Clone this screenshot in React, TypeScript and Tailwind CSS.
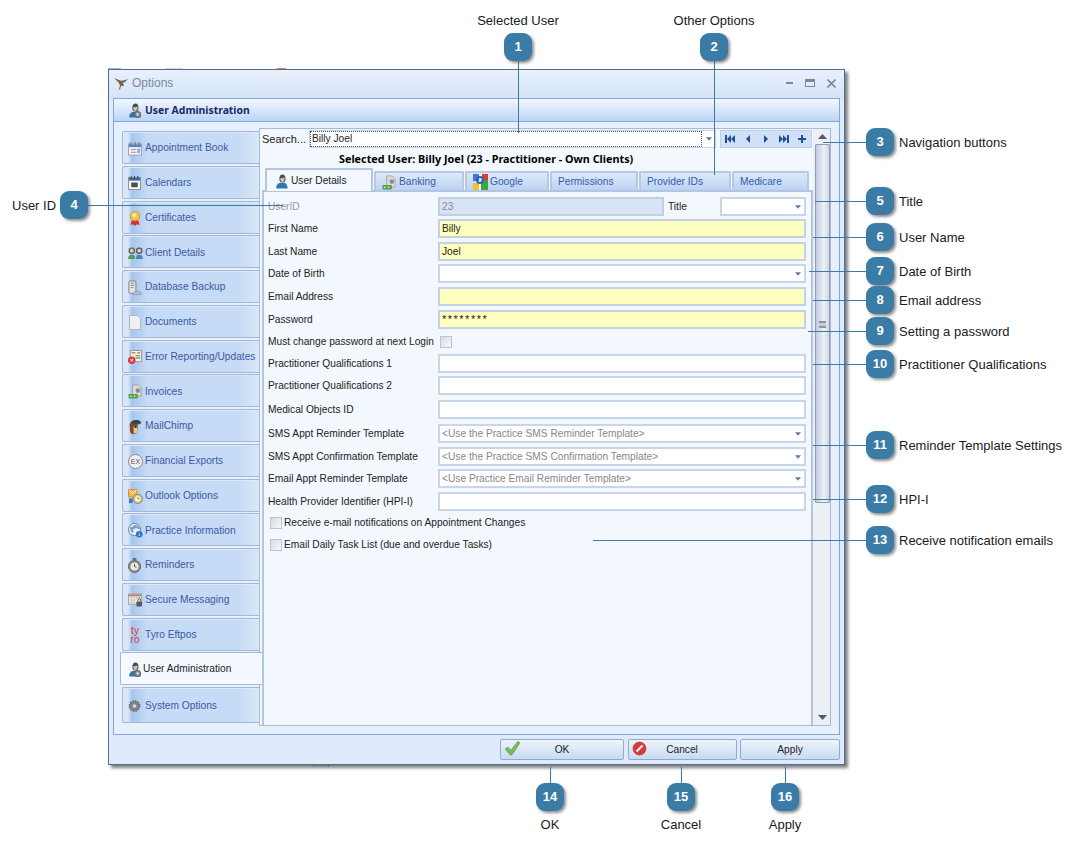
import React from 'react';

const Person = ({ gear = false }: { gear?: boolean }) => (
  <svg width="14" height="17" viewBox="0 0 16 18" className="shrink-0">
    <path d="M5 6c0-3 1-5 3.500-5S12 3 12 6s-1.500 4-3.500 4S5 9 5 6z" fill="#4a4f57" />
    <path d="M6 5c1 .5 3 .5 5-.5C11 8 10 9.500 8.500 9.500S6 8 6 5z" fill="#d8c4ae" />
    <path d="M1.500 17c-.5-4 2-6 5-6.500h4c2 .5 3.500 2 4 6.500z" fill="#2f78ad" />
    {gear && <circle cx="11" cy="13.500" r="3.500" fill="#8a8f96" stroke="#50555c" />}
    {gear && <circle cx="11" cy="13.500" r="1.300" fill="#e5e8ec" />}
  </svg>
);

const Gear = () => (
  <svg width="13" height="14" viewBox="0 0 16 16" className="shrink-0">
    <circle cx="8" cy="8" r="6" fill="#7d8186" stroke="#6b6f74" strokeWidth="2.500" strokeDasharray="2 1.100" />
    <circle cx="8" cy="8" r="4.500" fill="#85898e" />
    <circle cx="8" cy="8" r="2.200" fill="#d7dadd" />
  </svg>
);

const Note = () => (
  <svg width="15" height="15" viewBox="0 0 16 16" className="shrink-0">
    <path d="M5 1h6l3 3v9H5z" fill="#dcdcdc" stroke="#8f8f8f" strokeWidth=".7" />
    <circle cx="10.500" cy="7" r="2.500" fill="#8e8e8e" />
    <rect x="1" y="11" width="9" height="4" fill="#52ad48" stroke="#2f8429" strokeWidth=".5" />
    <circle cx="3" cy="13" r=".8" fill="#fff" />
    <circle cx="7" cy="13" r=".8" fill="#fff" />
  </svg>
);

const GoogleIcon = () => (
  <svg width="15" height="16" viewBox="0 0 15 16" className="shrink-0">
    <rect width="6" height="7" fill="#3d78d8" />
    <rect x="9" width="6" height="6" fill="#dc3b2e" />
    <rect x="6" width="3" height="16" fill="#f3f3f3" />
    <rect y="9" width="6" height="7" fill="#f2c02e" />
    <rect x="8" y="6" width="7" height="10" fill="#3da546" />
    <circle cx="7" cy="6" r="3" fill="none" stroke="#2c63bc" strokeWidth="2" />
  </svg>
);

const icons: Record<string, React.ReactNode> = {
  'Appointment Book': (
    <svg width="14" height="14" viewBox="0 0 15 15" className="shrink-0">
      <rect x=".5" y="2" width="14" height="12" fill="#f3f5fb" stroke="#93a3c0" />
      <rect x="1" y="2.500" width="13" height="3" fill="#5e83c2" />
      <path d="M3 0v4M7.500 0v4M12 0v4" stroke="#606c80" />
      <path d="M3 8h6M3 11h6" stroke="#d4756d" />
      <rect x="10" y="7" width="3" height="5" fill="#79b5e6" />
    </svg>
  ),
  Calendars: (
    <svg width="13" height="14" viewBox="0 0 14 15" className="shrink-0">
      <rect x=".5" y="1.500" width="13" height="13" fill="#f7f7f2" stroke="#8c8c8c" />
      <rect x="1" y="2" width="12" height="3" fill="#3870b4" />
      <path d="M3.500 0v3M7 0v3M10.500 0v3" stroke="#333" />
      <rect x="3.500" y="7" width="7" height="5" fill="#4d4d4d" />
    </svg>
  ),
  Certificates: (
    <svg width="12" height="15" viewBox="0 0 12 16" className="ml-[1px] shrink-0">
      <path d="M3 9l-2 6 3-1 2 2 2-2 3 1-2-6z" fill="#d8302a" />
      <circle cx="6" cy="5.500" r="5" fill="#f2c94a" stroke="#c89625" />
      <circle cx="5" cy="4.500" r="2" fill="#fbeaa4" />
    </svg>
  ),
  'Client Details': (
    <svg width="15" height="12" viewBox="0 0 16 13" className="shrink-0">
      <rect x=".5" y=".5" width="7" height="7" rx="3" fill="#5f6a62" />
      <rect x="8.500" y=".5" width="7" height="7" rx="3" fill="#555e6a" />
      <circle cx="4" cy="4" r="2" fill="#d9d2c7" />
      <circle cx="12" cy="4" r="2" fill="#d9d2c7" />
      <path d="M0 13c0-3 1.500-4.500 3.500-4.500h1C6.500 8.500 7.500 10 7.500 13z" fill="#4aa05a" />
      <path d="M8.500 13c0-3 1-4.500 3-4.500h1c2 0 3.500 1.500 3.500 4.500z" fill="#4e84b8" />
    </svg>
  ),
  'Database Backup': (
    <svg width="14" height="16" viewBox="0 0 16 17" className="shrink-0">
      <rect x="1" y=".5" width="8" height="14" rx="1" fill="#e3e3e3" stroke="#77797d" />
      <path d="M3 3h4M3 5.500h4M3 8h3" stroke="#80848a" />
      <path d="M6 15c0-2 2-3 4-3s5 1 6 3v1H6z" fill="#b9bdc2" stroke="#83868b" strokeWidth=".5" />
    </svg>
  ),
  Documents: (
    <svg width="12" height="15" viewBox="0 0 12 15" className="ml-[1px] shrink-0">
      <path d="M.5.500h8l3 3v11H.5z" fill="#eef0f2" stroke="#b3b6ba" />
    </svg>
  ),
  'Error Reporting/Updates': (
    <svg width="14" height="14" viewBox="0 0 15 15" className="shrink-0">
      <rect x="2.500" y=".5" width="12" height="12" fill="#eeeeea" stroke="#96989b" />
      <path d="M4 3h4M10 3h3" stroke="#c08b3d" strokeWidth="1.500" />
      <path d="M8 6h5M8 8.500h5" stroke="#7ca16d" strokeWidth="1.500" />
      <circle cx="4" cy="11" r="4" fill="#d93b3b" />
      <path d="M2.500 9.500l3 3M5.500 9.500l-3 3" stroke="#fff" />
    </svg>
  ),
  Invoices: <Note />,
  MailChimp: (
    <svg width="14" height="16" viewBox="0 0 15 17" className="shrink-0">
      <path d="M2 9c-1-5 2-8 6-8 3 0 6 1.500 6 4l-4 1c1 4 0 10-4 10S2 13 2 9z" fill="#7b4a26" />
      <path d="M3 4c2-3 7-4 10-2l1 2-7 1z" fill="#25485f" />
      <path d="M6 8c2 0 4 0 4 3s-2 5-4 4z" fill="#efc69b" />
      <circle cx="8" cy="8.500" r="1" fill="#1d1d1d" />
    </svg>
  ),
  'Financial Exports': (
    <span className="flex h-[15px] w-[15px] shrink-0 items-center justify-center rounded-full border border-[#8b8b8b] bg-[#f0f0f0] text-[7px] leading-none text-[#555]">
      EX
    </span>
  ),
  'Outlook Options': (
    <svg width="15" height="15" viewBox="0 0 16 16" className="shrink-0">
      <rect x=".5" y=".5" width="9" height="8" fill="#f4b74a" stroke="#d6902a" />
      <path d="M1 1l4 4 4-4" fill="none" stroke="#fff" />
      <rect x="1" y="10" width="4" height="5" fill="#3d7cb8" />
      <circle cx="10.500" cy="10.500" r="5" fill="#f2c14a" stroke="#4f93c9" />
      <circle cx="10.500" cy="10.500" r="2.800" fill="#fff" />
      <path d="M10.500 8.500v2h2" stroke="#444" strokeWidth=".7" fill="none" />
    </svg>
  ),
  'Practice Information': (
    <svg width="15" height="15" viewBox="0 0 16 16" className="shrink-0">
      <circle cx="7" cy="7" r="6.500" fill="#e3ecf7" stroke="#5d7ea6" />
      <path d="M2 4c2 1 3 0 4-1s3-1 4 0-1 3-3 3-2 2-1 3-1 2-3 0z" fill="#7f9cc0" />
      <path d="M9 3l3 1 1 3-3-1z" fill="#7f9cc0" />
      <circle cx="12" cy="12" r="3.500" fill="#2b75c8" />
      <path d="M12 10.500v.8M12 12v2" stroke="#fff" />
    </svg>
  ),
  Reminders: (
    <svg width="13" height="15" viewBox="0 0 14 16" className="shrink-0">
      <rect x="5" y="0" width="4" height="2" fill="#6d6d6d" />
      <circle cx="7" cy="9" r="6.500" fill="#8d8d8d" stroke="#5f5f5f" />
      <circle cx="7" cy="9" r="4.300" fill="#e9e9e2" />
      <path d="M7 6.500V9l2 1" stroke="#444" fill="none" />
    </svg>
  ),
  'Secure Messaging': (
    <svg width="15" height="14" viewBox="0 0 16 15" className="shrink-0">
      <rect x=".5" y="1" width="14" height="11" fill="#ece9e6" stroke="#a2a2a2" />
      <rect x="1" y="1.500" width="13" height="2" fill="#c9776f" />
      <path d="M3 5h1M6 5h1M9 5h1M12 5h1M3 7.500h1M6 7.500h1M3 10h1M6 10h1" stroke="#8a8f97" strokeWidth="1.500" />
      <rect x="9" y="9" width="6" height="5.500" rx="1" fill="#55595f" />
      <path d="M10.500 9V7.500a1.500 1.500 0 013 0V9" fill="none" stroke="#55595f" />
    </svg>
  ),
  'Tyro Eftpos': (
    <span className="ml-[1px] flex w-[12px] shrink-0 flex-col items-center text-[10px] leading-[9px] text-[#d8353c]">
      <span>ty</span>
      <span>ro</span>
    </span>
  ),
  'User Administration': <Person gear />,
  'System Options': <Gear />,
};

const sideItems = [
  'Appointment Book',
  'Calendars',
  'Certificates',
  'Client Details',
  'Database Backup',
  'Documents',
  'Error Reporting/Updates',
  'Invoices',
  'MailChimp',
  'Financial Exports',
  'Outlook Options',
  'Practice Information',
  'Reminders',
  'Secure Messaging',
  'Tyro Eftpos',
  'User Administration',
  'System Options',
];

const Arrow = () => (
  <svg width="6" height="4" viewBox="0 0 7 4" className="shrink-0">
    <path d="M0 0h7L3.500 4z" fill="#5d7ba6" />
  </svg>
);

const Field = ({
  value = '',
  yellow = false,
  select = false,
  muted = false,
  stars = false,
  className = 'flex-1',
}: {
  value?: string;
  yellow?: boolean;
  select?: boolean;
  muted?: boolean;
  stars?: boolean;
  className?: string;
}) => (
  <div
    className={`flex h-[19px] items-center justify-between border-2 pl-[2px] pr-[3px] ${
      yellow ? 'border-[#c3d1e6] bg-[#ffffbf]' : 'border-[#c8d6ea] bg-white'
    } ${muted ? 'text-[#888]' : 'text-[#222]'} ${className}`}
  >
    <span className={stars ? 'tracking-[1.500px] text-[11px]' : 'pt-[1px]'}>{value}</span>
    {select && <Arrow />}
  </div>
);

const Row = ({ label, mt, dim = false, children }: { label: string; mt: string; dim?: boolean; children?: React.ReactNode }) => (
  <div className={`flex h-[19px] items-center ${mt}`}>
    <span className={`w-[170px] shrink-0 whitespace-nowrap pt-[1px] ${dim ? 'text-[#9a9a9a]' : 'text-[#222]'}`}>{label}</span>
    {children}
  </div>
);

const Checkbox = () => (
  <span className="h-[12px] w-[12px] shrink-0 border border-[#b9c3d2] bg-[linear-gradient(135deg,#d5dae2,#f8f9fb)]" />
);

const Tab = ({ children, w, active = false }: { children: React.ReactNode; w: string; active?: boolean }) =>
  active ? (
    <div className={`relative z-10 flex h-[23px] items-center gap-[2px] rounded-t-[2px] border-2 border-b-0 border-[#b3c5e0] bg-[#f3f8ff] pl-[8px] pt-[1px] text-[#222] ${w}`}>
      {children}
    </div>
  ) : (
    <div className={`flex h-[20px] items-center gap-[2px] rounded-t-[2px] border-2 border-b-0 border-[#b6c8e2] bg-[linear-gradient(#dce9fa,#b9d2f2)] pl-[6px] text-[#3a5aa6] ${w}`}>
      {children}
    </div>
  );

const SmallTri = ({ d }: { d: string }) => (
  <svg width="10" height="8" viewBox="0 0 10 8" className="shrink-0">
    <path d={d} fill="#1d4f9c" />
  </svg>
);

const callouts = [
  { n: 1, box: 'left-[504px] top-[33px]' },
  { n: 2, box: 'left-[700px] top-[33px]' },
  { n: 3, box: 'left-[866px] top-[128px]' },
  { n: 4, box: 'left-[60px] top-[191px]' },
  { n: 5, box: 'left-[866px] top-[187px]' },
  { n: 6, box: 'left-[866px] top-[223px]' },
  { n: 7, box: 'left-[866px] top-[257px]' },
  { n: 8, box: 'left-[866px] top-[286px]' },
  { n: 9, box: 'left-[866px] top-[317px]' },
  { n: 10, box: 'left-[866px] top-[350px]' },
  { n: 11, box: 'left-[866px] top-[431px]' },
  { n: 12, box: 'left-[866px] top-[485px]' },
  { n: 13, box: 'left-[866px] top-[526px]' },
  { n: 14, box: 'left-[536px] top-[783px]' },
  { n: 15, box: 'left-[667px] top-[783px]' },
  { n: 16, box: 'left-[771px] top-[783px]' },
];

const lines = [
  'left-[518px] top-[60px] h-[73px] w-px',
  'left-[714px] top-[60px] h-[115px] w-px',
  'left-[823px] top-[142px] h-px w-[45px]',
  'left-[87px] top-[205px] h-px w-[196px]',
  'left-[815px] top-[201px] h-px w-[53px]',
  'left-[813px] top-[237px] h-px w-[55px]',
  'left-[809px] top-[271px] h-px w-[59px]',
  'left-[813px] top-[300px] h-px w-[55px]',
  'left-[808px] top-[331px] h-px w-[60px]',
  'left-[813px] top-[364px] h-px w-[55px]',
  'left-[813px] top-[445px] h-px w-[55px]',
  'left-[813px] top-[499px] h-px w-[55px]',
  'left-[593px] top-[540px] h-px w-[275px]',
  'left-[550px] top-[767px] h-[17px] w-px',
  'left-[681px] top-[767px] h-[17px] w-px',
  'left-[785px] top-[767px] h-[17px] w-px',
];

const rightLabels = [
  { t: 'Navigation buttons', c: 'top-[135px]' },
  { t: 'Title', c: 'top-[194px]' },
  { t: 'User Name', c: 'top-[230px]' },
  { t: 'Date of Birth', c: 'top-[264px]' },
  { t: 'Email address', c: 'top-[293px]' },
  { t: 'Setting a password', c: 'top-[324px]' },
  { t: 'Practitioner Qualifications', c: 'top-[357px]' },
  { t: 'Reminder Template Settings', c: 'top-[438px]' },
  { t: 'HPI-I', c: 'top-[492px]' },
  { t: 'Receive notification emails', c: 'top-[533px]' },
];

const centerLabels = [
  { t: 'Selected User', c: 'left-[418px] top-[13px]' },
  { t: 'Other Options', c: 'left-[614px] top-[13px]' },
  { t: 'OK', c: 'left-[450px] top-[817px]' },
  { t: 'Cancel', c: 'left-[581px] top-[817px]' },
  { t: 'Apply', c: 'left-[685px] top-[817px]' },
];

const FooterBtn = ({ w, icon, label }: { w: string; icon?: React.ReactNode; label: string }) => (
  <div className={`relative flex h-[21px] items-center justify-center rounded-[2px] border border-[#8eabd2] bg-[linear-gradient(#eef4fc,#dbe7f6_50%,#c9daf0)] pt-[1px] text-[#222] ${w}`}>
    {icon && <span className="absolute left-[3px] top-[1px]">{icon}</span>}
    {label}
  </div>
);

export default function App() {
  return (
    <div className="relative h-[848px] w-[1078px] overflow-hidden bg-white font-['Liberation_Sans',sans-serif]">
      {/* bits of the page behind the dialog */}
      <div className="absolute left-[277px] top-[68px] h-px w-[9px] bg-[#e07a68]" />
      <div className="absolute left-[108px] top-[68px] h-px w-[13px] bg-[#a9b4c4]" />
      <div className="absolute left-[165px] top-[68px] h-px w-[18px] bg-[#cfdde9]" />
      <div className="absolute left-[313px] top-[764px] h-[3px] w-[16px] border-x border-[#8fa8ce] bg-[#e3edfb]" />

      {/* dialog */}
      <div className="absolute left-[108px] top-[69px] flex h-[696px] w-[737px] flex-col border border-[#4f6d92] bg-[#dfebfc] text-[10.200px] leading-none shadow-[3px_3px_3px_rgba(60,60,60,0.65)]">
        {/* title bar */}
        <div className="flex h-[28px] shrink-0 items-center bg-[linear-gradient(#e9f1fc,#d4e4f8)] pb-[2px] pl-[4px] pr-[8px]">
          <svg width="16" height="15" viewBox="0 0 16 15" className="mr-[3px]">
            <path d="M1 2l5 2 3 1 6-2-3 3-2 1 1 3H8l-1 4-1-1 1-4-2-3z" fill="#6f6a5c" />
            <path d="M8 5l4-1-3 3z" fill="#b4573b" />
          </svg>
          <span className="text-[12px] text-[#7b8899]">Options</span>
          <div className="ml-auto flex items-center gap-[12px]">
            <span className="h-[2px] w-[7px] bg-[#808a97]" />
            <span className="h-[8px] w-[10px] border border-t-[3px] border-[#808a97]" />
            <svg width="9" height="9" viewBox="0 0 9 9">
              <path d="M.5.500l8 8M8.500.500l-8 8" stroke="#808a97" strokeWidth="1.600" />
            </svg>
          </div>
        </div>

        {/* group */}
        <div className="mx-[4px] flex h-[637px] shrink-0 flex-col border border-[#82a8da] bg-[#e6f0fe]">
          <div className="flex h-[23px] shrink-0 items-center gap-[3px] border-b border-[#82a9da] bg-[linear-gradient(#f4f8fe,#bcd4f4)] pl-[14px] text-[#15296b]">
            <Person gear />
            <span className="font-['Noto_Sans',sans-serif] text-[10.400px] font-bold">User Administration</span>
          </div>

          <div className="flex flex-1 pl-[8px] pt-[6px]">
            {/* side tabs */}
            <div className="flex w-[137px] shrink-0 flex-col gap-[1.750px] pt-[3px]">
              {sideItems.map(item =>
                item === 'User Administration' ? (
                  <div
                    key={item}
                    className="relative z-20 -ml-[2px] -mr-[3px] flex h-[33px] shrink-0 items-center gap-[1px] rounded-l-[2px] border border-r-0 border-[#a3b7d6] bg-[#f5f9ff] pl-[7px] pt-[1px] text-[#222]"
                  >
                    <span className="flex w-[14px] shrink-0">{icons[item]}</span>
                    {item}
                  </div>
                ) : (
                  <div
                    key={item}
                    className={`relative flex shrink-0 items-center rounded-l-[2px] border border-r-0 border-[#a3b7d6] bg-[linear-gradient(90deg,#d8e6f8,#d8e6f8_5px,#a7c6ed_9px,#c6dbf5_24px,#c6dbf5_85%,#d9e7f8)] pl-[5px] pt-[2px] text-[#3a5aa6] shadow-[inset_1px_1px_0_#dce8f8] ${
                      item === 'System Options' ? 'h-[36px]' : 'h-[33px]'
                    }`}
                  >
                    <span className="flex w-[17px] shrink-0">{icons[item]}</span>
                    <span className="whitespace-nowrap">{item}</span>
                  </div>
                )
              )}
            </div>

            {/* page */}
            <div className="relative z-10 flex h-[598px] w-[572px] shrink-0 border border-[#a6bad8] bg-[#f3f8ff]">
              <div className="flex w-[553px] shrink-0 flex-col">
                <div className="flex h-[19px] shrink-0 items-end pl-[2px]">
                  <span className="flex h-[18px] w-[47px] items-center text-[11px] text-[#222]">Search...</span>
                  <div className="flex h-[18px] w-[407px] items-center border border-[#c5d3e8] bg-white">
                    <div className="flex h-[16px] w-[392px] items-center border border-dotted border-[#555] pl-[1px] pt-[1px] text-[#222]">
                      Billy Joel
                    </div>
                    <span className="ml-[4px]"><Arrow /></span>
                  </div>
                  <div className="ml-[4px] flex h-[18px] w-[92px] items-center justify-between border border-[#bdd0ea] bg-[#cfe0f7] px-[4px]">
                    <SmallTri d="M0 0h2v8H0zM6 0v8L2 4zM10 0v8L6 4z" />
                    <SmallTri d="M7 0v8L3 4z" />
                    <SmallTri d="M3 0v8l4-4z" />
                    <SmallTri d="M10 0H8v8h2zM0 0v8l4-4zM4 0v8l4-4z" />
                    <SmallTri d="M4 0h2v3h3v2H6v3H4V5H1V3h3z" />
                  </div>
                </div>
                <div className="flex h-[20px] shrink-0 items-center pl-[79px] pt-[2px] font-['Noto_Sans',sans-serif] text-[10.800px] font-bold text-black">
                  Selected User: Billy Joel (23 - Practitioner - Own Clients)
                </div>
                <div className="-mb-px flex h-[23px] shrink-0 items-end gap-[1px] pl-[5px]">
                  <Tab w="w-[108px]" active>
                    <Person />
                    User Details
                  </Tab>
                  <Tab w="w-[90px]">
                    <Note />
                    Banking
                  </Tab>
                  <Tab w="w-[84px]">
                    <GoogleIcon />
                    Google
                  </Tab>
                  <Tab w="w-[88px]">Permissions</Tab>
                  <Tab w="w-[92px]">Provider IDs</Tab>
                  <Tab w="w-[77px]">Medicare</Tab>
                </div>
                <div className="ml-[2px] flex-1 border-2 border-b-0 border-[#b3c5e0] pl-[4px] pr-[5px] pt-[5px]">
                  <Row label="UserID" dim mt="mt-0">
                    <div className="flex h-[19px] w-[226px] items-center border-2 border-[#c0cfe4] bg-[#d8e4f3] pl-[2px] pt-[1px] text-[#8a8a8a]">23</div>
                    <span className="ml-[4px] w-[52px] pt-[1px] text-[#222]">Title</span>
                    <Field select />
                  </Row>
                  <Row label="First Name" mt="mt-[3px]"><Field yellow value="Billy" /></Row>
                  <Row label="Last Name" mt="mt-[4px]"><Field yellow value="Joel" /></Row>
                  <Row label="Date of Birth" mt="mt-[3px]"><Field select /></Row>
                  <Row label="Email Address" mt="mt-[4px]"><Field yellow /></Row>
                  <Row label="Password" mt="mt-[4px]"><Field yellow stars value="********" /></Row>
                  <Row label="Must change password at next Login" mt="mt-[3px]">
                    <span className="ml-[2px] flex"><Checkbox /></span>
                  </Row>
                  <Row label="Practitioner Qualifications 1" mt="mt-[3px]"><Field /></Row>
                  <Row label="Practitioner Qualifications 2" mt="mt-[3px]"><Field /></Row>
                  <Row label="Medical Objects ID" mt="mt-[5px]"><Field /></Row>
                  <Row label="SMS Appt Reminder Template" mt="mt-[5px]">
                    <Field select muted value="<Use the Practice SMS Reminder Template>" />
                  </Row>
                  <Row label="SMS Appt Confirmation Template" mt="mt-[4px]">
                    <Field select muted value="<Use the Practice SMS Confirmation Template>" />
                  </Row>
                  <Row label="Email Appt Reminder Template" mt="mt-[3px]">
                    <Field select muted value="<Use Practice Email Reminder Template>" />
                  </Row>
                  <Row label="Health Provider Identifier (HPI-I)" mt="mt-[4px]"><Field /></Row>
                  <div className="mt-[5px] flex h-[14px] items-center gap-[2px] pl-[2px] text-[#222]">
                    <Checkbox />
                    <span className="pt-[1px]">Receive e-mail notifications on Appointment Changes</span>
                  </div>
                  <div className="mt-[8px] flex h-[14px] items-center gap-[2px] pl-[2px] text-[#222]">
                    <Checkbox />
                    <span className="pt-[1px]">Email Daily Task List (due and overdue Tasks)</span>
                  </div>
                </div>
              </div>

              {/* scrollbar */}
              <div className="flex w-[17px] shrink-0 flex-col items-end bg-[#eceff4]">
                <div className="flex h-[15px] w-[15px] shrink-0 items-center justify-center">
                  <svg width="9" height="5" viewBox="0 0 9 5"><path d="M4.500 0L9 5H0z" fill="#4c5a78" /></svg>
                </div>
                <div className="flex h-[359px] w-[15px] shrink-0 items-end justify-center rounded-[1px] border border-[#8e9fbc] bg-[linear-gradient(90deg,#bfcbdb,#eef2f7_60%,#d0d8e4)] pb-[174px]">
                  <span className="h-[7px] w-[7px] border-y-2 border-[#8c94a3] bg-[#c9d0da]" />
                </div>
                <div className="mt-auto flex h-[16px] w-[15px] items-center justify-center">
                  <svg width="9" height="5" viewBox="0 0 9 5"><path d="M0 0h9L4.500 5z" fill="#4c5a78" /></svg>
                </div>
              </div>
            </div>
          </div>
        </div>

        {/* footer */}
        <div className="flex flex-1 items-center justify-end gap-[3.500px] pr-[4px]">
          <FooterBtn
            w="w-[124px]"
            label="OK"
            icon={
              <svg width="17" height="15" viewBox="0 0 17 15">
                <path d="M1 8l3-2 3 3 7-9 2 2-8 12H6z" fill="#7cb85c" stroke="#5c9a42" strokeWidth=".5" />
              </svg>
            }
          />
          <FooterBtn
            w="w-[109px]"
            label="Cancel"
            icon={
              <svg width="15" height="15" viewBox="0 0 15 15">
                <circle cx="7.500" cy="7.500" r="6.500" fill="#d93a3a" stroke="#a92a2a" strokeWidth=".6" />
                <path d="M4.500 10.500l6-6" stroke="#fff" strokeWidth="2" />
              </svg>
            }
          />
          <FooterBtn w="w-[100px]" label="Apply" />
        </div>
      </div>

      {/* callouts */}
      {lines.map(l => (
        <div key={l} className={`absolute z-30 bg-[#3a7ca5] ${l}`} />
      ))}
      {callouts.map(c => (
        <div
          key={c.n}
          className={`absolute z-30 flex h-[28px] w-[28px] items-center justify-center rounded-[9px] bg-[#3a7ca5] text-[13px] font-bold text-white shadow-[2px_2px_3px_rgba(70,70,70,0.6)] ${c.box}`}
        >
          {c.n}
        </div>
      ))}
      {rightLabels.map(l => (
        <span key={l.t} className={`absolute left-[899px] text-[13px] leading-[16px] text-[#1a1a1a] ${l.c}`}>
          {l.t}
        </span>
      ))}
      {centerLabels.map(l => (
        <span key={l.t} className={`absolute w-[200px] text-center text-[13px] leading-[16px] text-[#1a1a1a] ${l.c}`}>
          {l.t}
        </span>
      ))}
      <span className="absolute left-[12px] top-[198px] text-[13px] leading-[16px] text-[#1a1a1a]">
        User ID
      </span>
    </div>
  );
}
